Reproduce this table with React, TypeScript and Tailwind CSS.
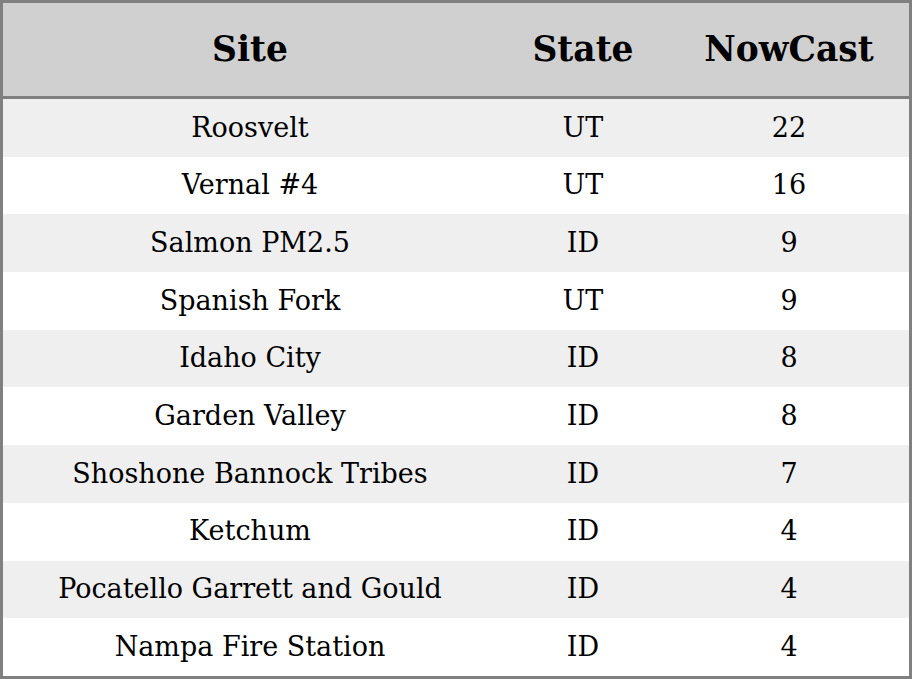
const rows: [string, string, number][] = [
  ["Roosvelt", "UT", 22],
  ["Vernal #4", "UT", 16],
  ["Salmon PM2.5", "ID", 9],
  ["Spanish Fork", "UT", 9],
  ["Idaho City", "ID", 8],
  ["Garden Valley", "ID", 8],
  ["Shoshone Bannock Tribes", "ID", 7],
  ["Ketchum", "ID", 4],
  ["Pocatello Garrett and Gould", "ID", 4],
  ["Nampa Fire Station", "ID", 4],
];

const cols = "grid grid-cols-[494px_172px_240px]";

export default function App() {
  return (
    <div className="h-[679px] w-[912px] border-[3px] border-[#808080] bg-white font-['DejaVu_Serif',serif] text-black">
      <div className={`${cols} h-[96px] items-center border-b-[3px] border-[#808080] bg-[#d0d0d0] text-[34.5px] font-bold`}>
        <div className="text-center">Site</div>
        <div className="text-center">State</div>
        <div className="text-center">NowCast</div>
      </div>
      {rows.map(([site, state, value], i) => (
        <div
          key={site}
          className={`${cols} h-[57.7px] items-center text-[27px] ${i % 2 === 0 ? "bg-[#efefef]" : "bg-white"}`}
        >
          <div className="text-center">{site}</div>
          <div className="text-center">{state}</div>
          <div className="text-center">{value}</div>
        </div>
      ))}
    </div>
  );
}
